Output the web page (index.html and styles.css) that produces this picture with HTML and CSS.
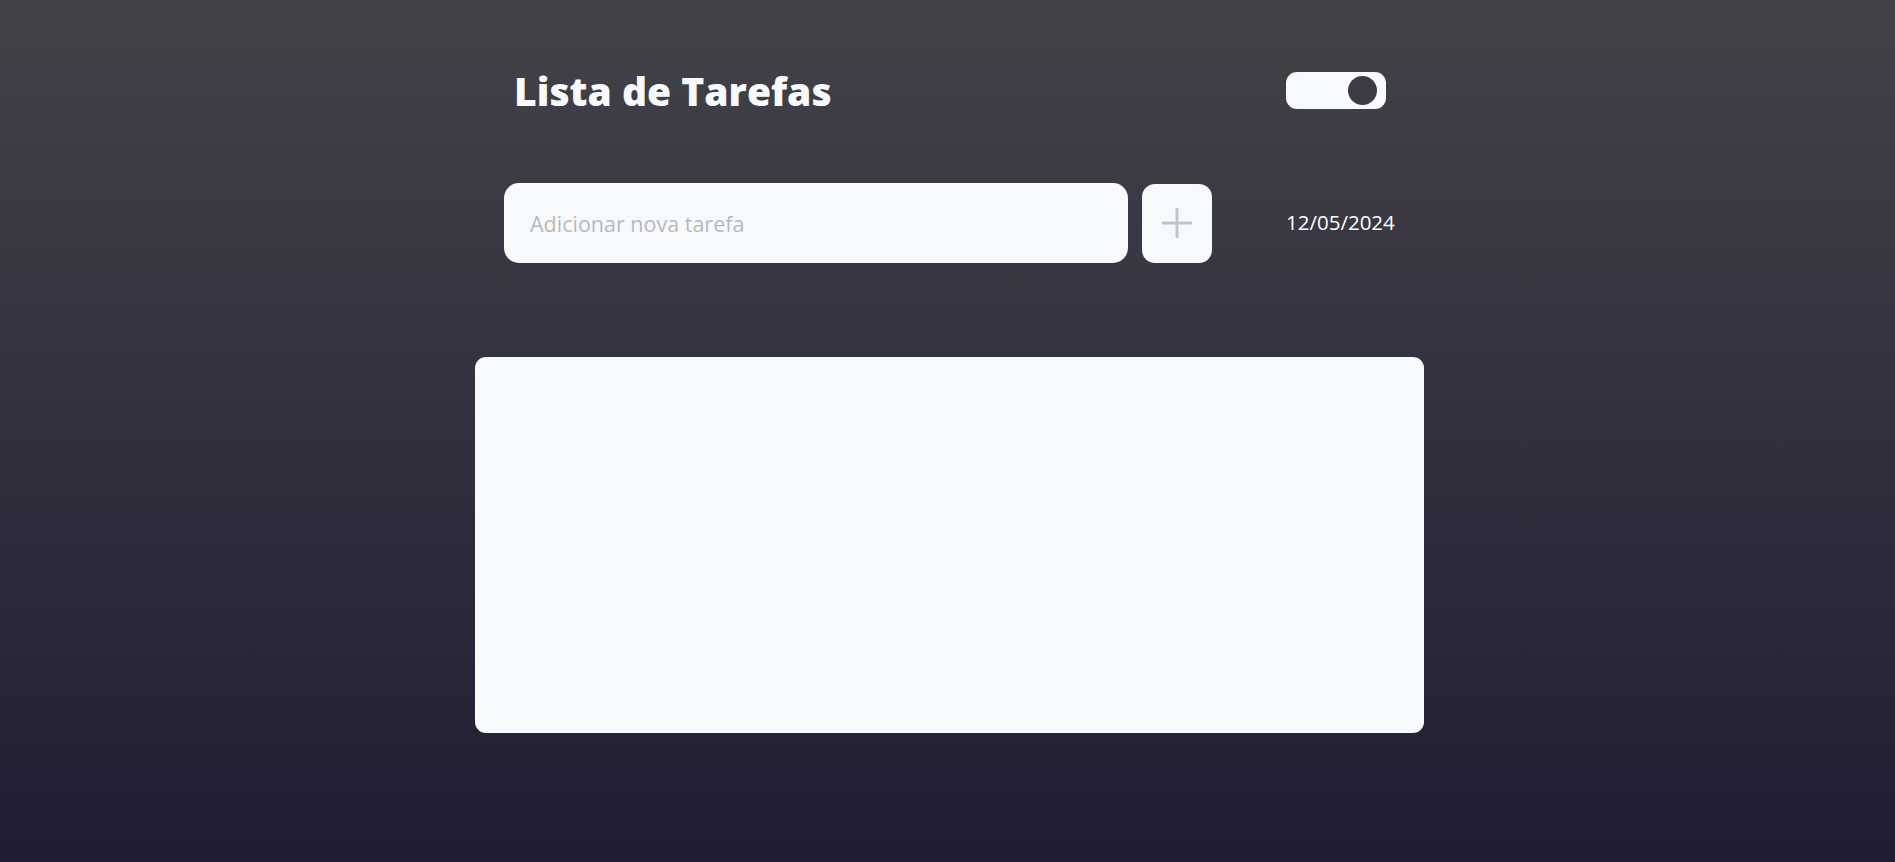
FILE: index.html
```html
<!DOCTYPE html>
<html lang="pt-BR">
<head>
<meta charset="utf-8">
<title>Lista de Tarefas</title>
<link rel="stylesheet" href="styles.css">
</head>
<body>
<main class="app">
  <header class="header">
    <h1 class="title">Lista de Tarefas</h1>
    <label class="toggle"><span class="knob"></span></label>
  </header>
  <section class="form-row">
    <input class="task-input" type="text" placeholder="Adicionar nova tarefa">
    <button class="add-btn" type="button" aria-label="Adicionar">
      <svg width="30" height="30" viewBox="0 0 30 30"><path d="M15 1V29M1 15H29" stroke="#c4c4c4" stroke-width="3" stroke-linecap="round"/></svg>
    </button>
    <span class="date">12/05/2024</span>
  </section>
  <section class="task-list"></section>
</main>
</body>
</html>
```
FILE: styles.css
```css
html, body {
  margin: 0;
  height: 100%;
}
body {
  background: linear-gradient(180deg, #434248 0%, #201d33 100%);
  font-family: "Open Sans", "Liberation Sans", sans-serif;
  padding-left: 4px;
  box-sizing: border-box;
}
.app {
  width: 949px;
  margin: 0 auto;
  padding-top: 60px;
}
.header {
  display: flex;
  align-items: center;
  justify-content: space-between;
  height: 60px;
  padding: 0 38px 0 39px;
}
.title {
  margin: 0;
  color: #f7fafd;
  font-family: "Open Sans", sans-serif;
  font-weight: 800;
  font-size: 39px;
}
.toggle {
  width: 100px;
  height: 37px;
  background: #f7fafd;
  border-radius: 11px;
  display: flex;
  align-items: center;
  justify-content: flex-end;
  padding-right: 9px;
  box-sizing: border-box;
}
.knob {
  width: 29px;
  height: 29px;
  border-radius: 50%;
  background: #3d3c45;
}
.form-row {
  display: flex;
  align-items: center;
  margin-top: 63px;
  padding-left: 29px;
}
.task-input {
  width: 624px;
  height: 80px;
  box-sizing: border-box;
  border: none;
  outline: none;
  border-radius: 15px;
  background: #f7fafd;
  padding: 0 26px;
  font-family: "Open Sans", sans-serif;
  font-size: 21.5px;
}
.task-input::placeholder {
  color: #bcb8b7;
}
.add-btn {
  width: 70px;
  height: 79px;
  margin-left: 14px;
  border: none;
  border-radius: 13px;
  background: #f7fafd;
  display: flex;
  align-items: center;
  justify-content: center;
  padding: 0;
}
.date {
  margin-left: 74px;
  margin-bottom: 2px;
  color: #ffffff;
  font-size: 20.5px;
  font-family: "Open Sans", sans-serif;
}
.task-list {
  margin-top: 94px;
  height: 376px;
  background: #f7fafd;
  border-radius: 11px;
}
```
